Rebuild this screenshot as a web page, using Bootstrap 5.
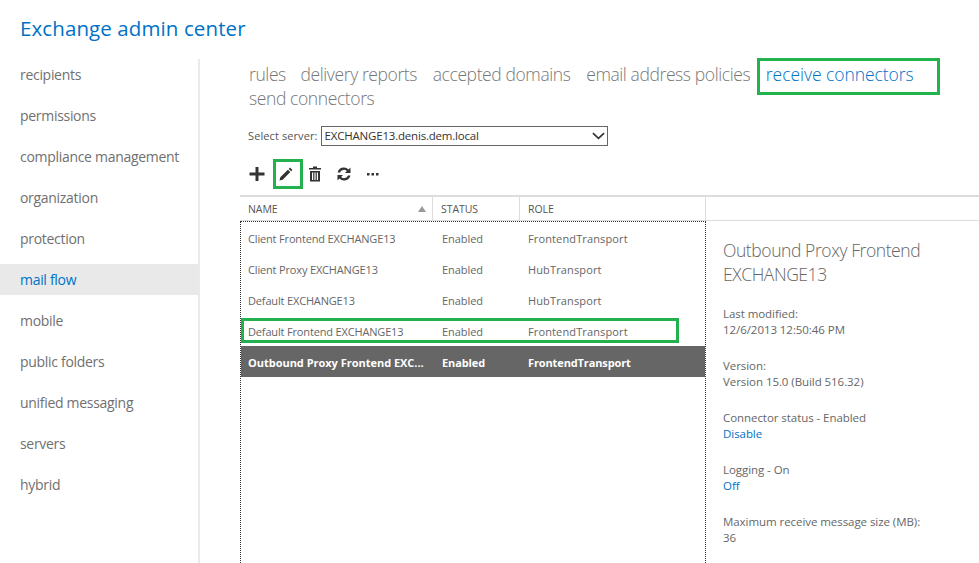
<!DOCTYPE html>
<html lang="en"><head><meta charset="utf-8"><title>Exchange admin center</title>
<link rel="stylesheet" href="https://cdn.jsdelivr.net/npm/bootstrap@5.3.0/dist/css/bootstrap.min.css">
<style>
html,body{height:563px;overflow:hidden;background:#fff}
body{font-family:"Open Sans","Liberation Sans",sans-serif;color:#666}
.eac-title{font-size:20.5px;line-height:28px;color:#0072c6;padding:14px 0 0 20px;height:59px;letter-spacing:.1px}
.eac-side{width:200px;flex:none;border-right:2px solid #eaeaea;height:504px}
.eac-side a{display:block;height:31px;line-height:32px;margin-bottom:10px;padding-left:20px;font-size:14px;color:#707070;text-decoration:none;letter-spacing:-.3px}
.eac-side a.on{background:#e9e9ea;color:#0072c6}
.eac-main{flex:1;min-width:0;padding-left:40px}
.eac-tabs{padding-left:9px;height:52px;padding-top:3px;font-size:17.5px;line-height:24px;color:#777;font-weight:300;letter-spacing:-.4px;width:720px}
.eac-tabs span{margin-right:11.500px;white-space:nowrap;display:inline-block}
.eac-tabs span:first-child{margin-right:10.500px}
.eac-tabs .cur{color:#0072c6;position:relative;letter-spacing:-.05px}
.eac-tabs .cur::after{content:"";position:absolute;left:-9px;top:-4px;width:183px;height:37px;border:3px solid #22b14c}
.eac-srv{padding-left:8px;height:30px;margin-top:10px;font-size:11px;letter-spacing:.1px;color:#555}
.eac-select.form-select{width:287px;height:20px;margin-left:3px;border:1px solid #666;padding:0 0 0 3px;font-size:11.500px;line-height:18px;color:#333;font-family:inherit;letter-spacing:-.2px;border-radius:0;box-shadow:none;background-image:url("data:image/svg+xml,%3Csvg xmlns='http://www.w3.org/2000/svg' viewBox='0 0 14 8'%3E%3Cpath d='M1 1l6 5.500L13 1' fill='none' stroke='%23333' stroke-width='1.800'/%3E%3C/svg%3E");background-position:right 2px center;background-size:13px 8px}
.eac-tools{height:38px;padding:0 0 4px 9px;margin-top:6px}
.eac-tool{display:block;flex:none}
.eac-slot{width:28px;height:30px;margin-right:1px;flex:none}
.eac-pen{position:relative}
.eac-pen::after{content:"";position:absolute;left:-5px;top:0;width:30px;height:30px;border:3px solid #22b14c}
.eac-hd{height:26px;border-top:2px solid #dcdcdc;border-bottom:1px solid #dcdcdc;font-size:10.500px;color:#555;line-height:25px;letter-spacing:-.05px}
.eac-c1{width:193px;padding-left:8px;padding-right:6px;flex:none;border-right:1px solid #dcdcdc}
.eac-c1 span{padding-top:2px;line-height:21px}
.eac-c2{width:87px;padding-left:8px;flex:none;border-right:1px solid #dcdcdc}
.eac-c3{width:186px;padding-left:8px;flex:none;border-right:1px solid #dcdcdc}
.eac-grid{width:466px;flex:none;border-left:1px dotted #333;border-right:1px dotted #333;border-top:1px dotted #333;height:342px}
.eac-row{height:31px;line-height:33px;font-size:11px;color:#666;letter-spacing:-.16px;position:relative;white-space:nowrap}
.eac-row>div{flex:none}
.eac-r1{width:193px;padding-left:7px;overflow:hidden}
.eac-r2{width:86px;padding-left:8px;letter-spacing:-.05px}
.eac-r3{padding-left:8px;letter-spacing:.13px}
.eac-sel{background:#666;color:#fff;font-weight:700;letter-spacing:-.02px}
.eac-sel .eac-r2{letter-spacing:-.1px}
.eac-sel .eac-r3{letter-spacing:-.12px}
.eac-mark::after{content:"";position:absolute;left:0;top:3px;width:438px;height:25px;border:3px solid #22b14c}
.eac-det{padding:17px 0 0 17px;font-size:11.500px;line-height:16px;color:#666;letter-spacing:-.06px}
.eac-det h2{font-size:17.500px;line-height:24px;font-weight:300;color:#666;margin:0 0 20px;letter-spacing:-.42px}
.eac-det p{margin:0 0 20px}
.eac-det a{color:#0072c6;text-decoration:none;display:block}
</style></head><body>
<div class="eac-title">Exchange admin center</div>
<div class="d-flex">
<nav class="eac-side">
<a href="#">recipients</a><a href="#">permissions</a><a href="#">compliance management</a><a href="#">organization</a><a href="#">protection</a><a href="#" class="on">mail flow</a><a href="#">mobile</a><a href="#">public folders</a><a href="#">unified messaging</a><a href="#">servers</a><a href="#">hybrid</a>
</nav>
<main class="eac-main">
<div class="eac-tabs"><span>rules</span> <span>delivery reports</span> <span>accepted domains</span> <span>email address policies</span> <span class="cur">receive connectors</span> <span>send connectors</span></div>
<div class="eac-srv d-flex align-items-center"><label for="srv">Select server:</label><select id="srv" class="eac-select form-select"><option>EXCHANGE13.denis.dem.local</option></select></div>
<div class="eac-tools d-flex align-items-center">
<span class="eac-slot d-flex align-items-center"><svg class="eac-tool" width="16" height="16" viewBox="0 0 16 16"><path d="M6.500 1h3v5.500H15.500v3H9.500V15h-3V9.500H.500v-3h6z" fill="#333"/></svg></span>
<span class="eac-slot eac-pen d-flex align-items-center"><svg class="eac-tool" width="16" height="16" viewBox="0 0 16 16"><path d="M1.500 14.500l.8-3.200 7.600-7.600 2.400 2.400-7.600 7.600zM10.700 2.900l1.300-1.300 2.400 2.400-1.300 1.300z" fill="#333"/></svg></span>
<span class="eac-slot d-flex align-items-center"><svg class="eac-tool" width="16" height="16" viewBox="0 0 16 16"><path d="M6 .500h4V2h4v1.600H2V2h4zM3 5h10v10.500H3zM5 6.500V14h1.200V6.500zm2.400 0V14h1.200V6.500zm2.400 0V14H11V6.500z" fill="#333" fill-rule="evenodd"/></svg></span>
<span class="eac-slot d-flex align-items-center"><svg class="eac-tool" width="16" height="16" viewBox="0 0 16 16"><path d="M8 1.500a6.500 6.500 0 0 1 4.600 1.900L14.500 1.500V7H9l1.900-1.900A4.200 4.200 0 0 0 4 6.500H1.600A6.500 6.500 0 0 1 8 1.500zM1.500 9H7l-1.900 1.900A4.200 4.200 0 0 0 12 9.500h2.400A6.500 6.500 0 0 1 3.400 12.600L1.500 14.500z" fill="#333"/></svg></span>
<span class="eac-slot d-flex align-items-center"><svg class="eac-tool" width="16" height="16" viewBox="0 0 16 16"><path d="M2 7h2.500v2.500H2zM6.500 7H9v2.500H6.500zM11 7h2.500v2.500H11z" fill="#333"/></svg></span>
</div>
<div class="eac-hd d-flex">
<div class="eac-c1 d-flex justify-content-between align-items-center"><span>NAME</span><svg width="8" height="6" viewBox="0 0 8 6"><path d="M4 0l4 6H0z" fill="#999"/></svg></div>
<div class="eac-c2">STATUS</div><div class="eac-c3">ROLE</div>
</div>
<div class="d-flex">
<div class="eac-grid">
<div class="eac-row d-flex"><div class="eac-r1">Client Frontend EXCHANGE13</div><div class="eac-r2">Enabled</div><div class="eac-r3">FrontendTransport</div></div>
<div class="eac-row d-flex"><div class="eac-r1">Client Proxy EXCHANGE13</div><div class="eac-r2">Enabled</div><div class="eac-r3">HubTransport</div></div>
<div class="eac-row d-flex"><div class="eac-r1">Default EXCHANGE13</div><div class="eac-r2">Enabled</div><div class="eac-r3">HubTransport</div></div>
<div class="eac-row d-flex eac-mark"><div class="eac-r1">Default Frontend EXCHANGE13</div><div class="eac-r2">Enabled</div><div class="eac-r3">FrontendTransport</div></div>
<div class="eac-row d-flex eac-sel"><div class="eac-r1">Outbound Proxy Frontend EXC...</div><div class="eac-r2">Enabled</div><div class="eac-r3">FrontendTransport</div></div>
</div>
<aside class="eac-det">
<h2>Outbound Proxy Frontend EXCHANGE13</h2>
<p>Last modified:<br>12/6/2013 12:50:46 PM</p>
<p>Version:<br>Version 15.0 (Build 516.32)</p>
<p>Connector status - Enabled<a href="#">Disable</a></p>
<p>Logging - On<a href="#">Off</a></p>
<p>Maximum receive message size (MB):<br>36</p>
</aside>
</div>
</main>
</div>
</body></html>
